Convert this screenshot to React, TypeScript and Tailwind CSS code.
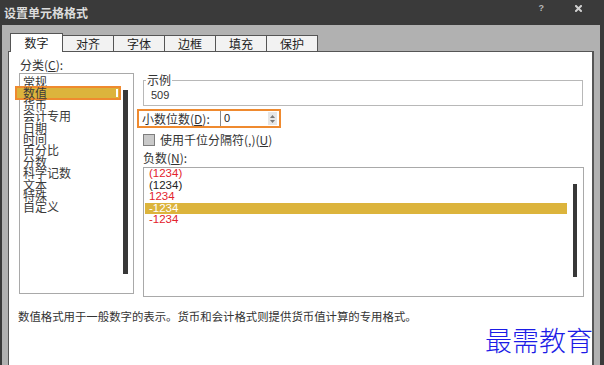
import React from 'react';

const categories = ['常规', '数值', '货币', '会计专用', '日期', '时间', '百分比', '分数', '科学记数', '文本', '特殊', '自定义'];

const negatives = [
  { text: '(1234)', color: 'text-[#e3222c]' },
  { text: '(1234)', color: 'text-[#222]' },
  { text: '1234', color: 'text-[#e3222c]' },
  { text: '-1234', color: 'text-white', selected: true },
  { text: '-1234', color: 'text-[#e3222c]' },
];

const tabs = ['对齐', '字体', '边框', '填充', '保护'];

export default function App() {
  return (
    <div className="relative w-[604px] h-[365px] overflow-hidden bg-[#3a3a3a] flex flex-col font-['Noto_Sans_CJK_SC',sans-serif] text-[#333]">
      {/* Title bar */}
      <div className="h-[25px] shrink-0 flex items-start">
        <span className="pl-[4px] pt-[5px] text-[12px] leading-[16px] font-bold text-[#dcdcdc]">设置单元格格式</span>
        <span className="ml-auto mt-[2px] text-[9px] leading-[12px] font-bold text-[#b8b8b8] font-['Liberation_Sans',sans-serif]">?</span>
        <svg className="ml-[31px] mr-[22px] mt-[5px]" width="7" height="7" viewBox="0 0 7 7">
          <path d="M1 1L6 6M6 1L1 6" stroke="#d0d0d0" strokeWidth="2" strokeLinecap="square" />
        </svg>
      </div>

      {/* Dialog body */}
      <div className="flex-1 flex pl-[2px] pr-[4px] min-h-0">
        <div className="flex-1 flex flex-col bg-[#b1b1b1] px-[6px] pt-[8px] min-h-0">
          {/* Tabs */}
          <div className="h-[18px] shrink-0 flex items-end pl-[2px]">
            <div className="relative z-10 w-[53px] h-[19px] -mb-[1px] bg-white border border-b-0 border-[#555] flex items-center justify-center text-[12px] text-[#222]">
              数字
            </div>
            {tabs.map((t) => (
              <div
                key={t}
                className="w-[51px] h-[16px] bg-[#f2f2f2] border border-l-0 border-b-0 border-[#555] flex items-center justify-center text-[12px] leading-[14px] text-[#222]"
              >
                {t}
              </div>
            ))}
          </div>

          {/* Content panel */}
          <div className="flex-1 flex flex-col bg-white border-t border-l border-r-2 border-[#555] min-h-0">
            <div className="flex">
              {/* Category column */}
              <div className="ml-[10px] w-[115px] pt-[5px] flex flex-col">
                <div className="h-[16px] pl-[1px] text-[12px] leading-[16px] text-[#333]">
                  分类(<u>C</u>):
                </div>
                <div className="h-[221px] border border-[#a9a9a9] flex">
                  <div className="flex-1 pt-[2px]">
                    {categories.map((c, i) => (
                      <div key={c} className="relative h-[11.4px] pl-[3px] text-[12px] leading-[11.4px] text-[#3a3a3a] whitespace-nowrap">
                        {i === 1 && (
                          <div className="absolute -left-[5px] -top-[1px] w-[106px] h-[14px] border-2 border-[#ef8a2f] bg-[#dcb43c]">
                            <div className="absolute left-[99px] top-[1px] w-[2px] h-[8px] bg-white" />
                          </div>
                        )}
                        <span className="relative">{c}</span>
                      </div>
                    ))}
                  </div>
                  <div className="w-[5px] h-[184px] mt-[16px] mr-[5px] bg-[#383838]" />
                </div>
              </div>

              {/* Right column */}
              <div className="ml-[3px] w-[447px] pt-[21px] flex flex-col">
                <fieldset className="ml-[6px] mr-[1px] h-[33px] border border-[#b8b8b8]">
                  <legend className="ml-[2px] px-[1px] text-[12px] leading-[14px] text-[#333]">示例</legend>
                  <div className="mt-[1px] pl-[7px] text-[11px] leading-[14px] text-[#333] font-['Liberation_Sans',sans-serif]">509</div>
                </fieldset>

                <div className="mt-[3px] w-[144px] h-[19px] border-2 border-[#ef8a2f] flex items-center">
                  <span className="pl-[3px] w-[81px] text-[12px] leading-[15px] text-[#333] whitespace-nowrap">
                    小数位数(<u>D</u>):
                  </span>
                  <div className="flex-1 h-[15px] border-l border-[#8a8a8a] flex items-center">
                    <span className="pl-[3px] text-[11px] font-['Liberation_Sans',sans-serif] text-[#222]">0</span>
                    <div className="ml-auto mr-[2px] w-[9px] h-[13px] bg-[#e6e6e6] flex flex-col items-center justify-center gap-[2px]">
                      <svg width="5" height="3" viewBox="0 0 5 3"><path d="M0 3L2.5 0L5 3Z" fill="#777" /></svg>
                      <svg width="5" height="3" viewBox="0 0 5 3"><path d="M0 0L2.5 3L5 0Z" fill="#777" /></svg>
                    </div>
                  </div>
                </div>

                <div className="mt-[5px] ml-[6px] h-[13px] flex items-center">
                  <div className="w-[12px] h-[12px] bg-[#c9c9c9] border border-[#7d7d7d]" />
                  <span className="ml-[5px] text-[12px] leading-[13px] text-[#333] whitespace-nowrap">
                    使用千位分隔符(,)(<u>U</u>)
                  </span>
                </div>

                <div className="mt-[4px] ml-[6px] h-[16px] text-[12px] leading-[16px] text-[#333]">
                  负数(<u>N</u>):
                </div>

                <div className="mt-[1px] ml-[6px] w-[441px] h-[130px] border border-[#a9a9a9] flex">
                  <div className="flex-1">
                    {negatives.map((n, i) => (
                      <div
                        key={i}
                        className={`ml-[1px] w-[422px] h-[11.5px] pl-[4px] text-[11.5px] leading-[11.5px] font-['Liberation_Sans',sans-serif] ${n.color} ${
                          n.selected ? 'bg-[#dcb43c]' : ''
                        }`}
                      >
                        {n.text}
                      </div>
                    ))}
                  </div>
                  <div className="w-[4px] h-[93px] mt-[16px] mr-[6px] bg-[#383838]" />
                </div>
              </div>
            </div>

            <p className="mt-[12px] ml-[9px] text-[11.4px] leading-[14px] text-[#333] whitespace-nowrap">
              数值格式用于一般数字的表示。货币和会计格式则提供货币值计算的专用格式。
            </p>
          </div>
        </div>
      </div>

      {/* Watermark */}
      <div className="absolute left-[485px] top-[324px] text-[27px] leading-[32px] font-light text-[#1c1ce6] whitespace-nowrap [text-shadow:0_0_2px_#fff]">
        最需教育
      </div>
    </div>
  );
}
